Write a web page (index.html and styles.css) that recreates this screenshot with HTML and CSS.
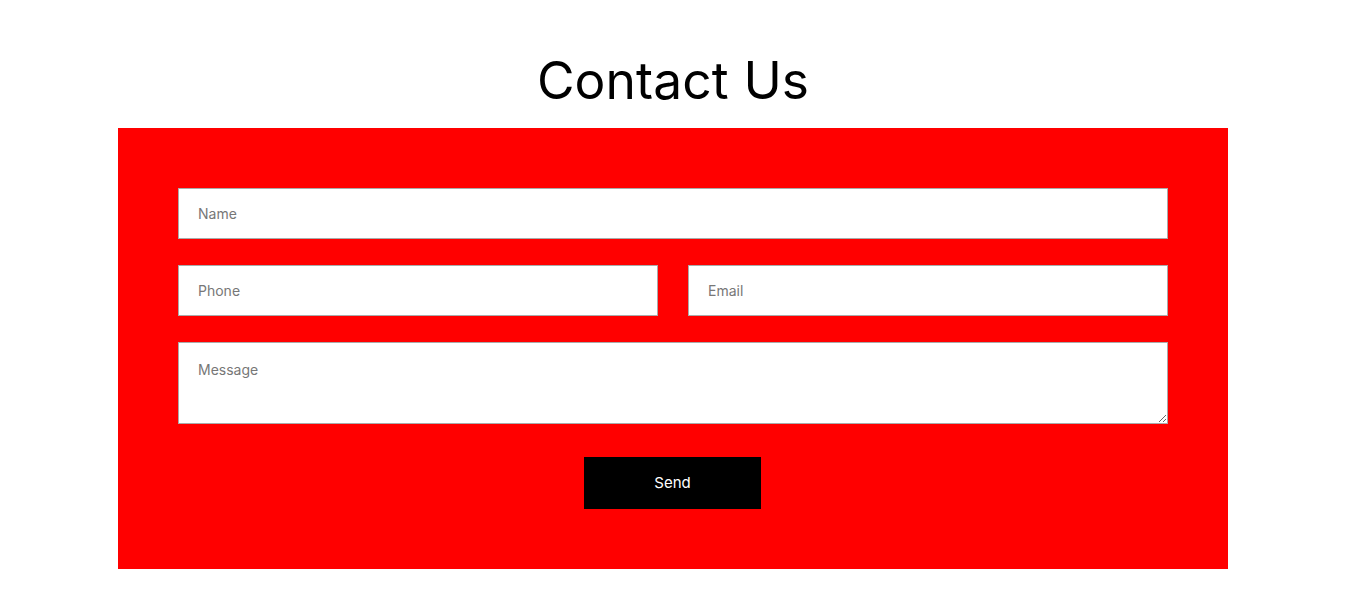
FILE: index.html
```html
<!DOCTYPE html>
<html>
<head>
<meta charset="utf-8">
<link rel="stylesheet" href="styles.css">
</head>
<body>
<section class="contact">
  <h2 class="title">Contact Us</h2>
  <form class="panel">
    <input class="field" type="text" placeholder="Name">
    <div class="row">
      <input class="field" type="text" placeholder="Phone">
      <input class="field" type="email" placeholder="Email">
    </div>
    <textarea class="field area" placeholder="Message"></textarea>
    <div class="actions">
      <button class="send" type="button">Send</button>
    </div>
  </form>
</section>
</body>
</html>
```
FILE: styles.css
```css
html, body {
  margin: 0;
  padding: 0;
  background: #fff;
}
body {
  font-family: "Inter", "Lato", "Open Sans", sans-serif;
}
.contact {
  display: flex;
  flex-direction: column;
  align-items: center;
  padding-top: 50px;
  padding-right: 1px;
}
.title {
  margin: 0 0 18px;
  font-size: 51.5px;
  line-height: 60px;
  font-weight: 400;
  color: #000;
  letter-spacing: 0.1px;
}
.panel {
  width: 990px;
  background: #ff0000;
  padding: 60px;
  display: flex;
  flex-direction: column;
  gap: 26px;
}
.row {
  display: flex;
  gap: 30px;
}
.field {
  box-sizing: border-box;
  display: block;
  width: 100%;
  height: 51px;
  margin: 0;
  padding: 0 19px;
  border: 1px solid #aaa;
  border-radius: 0;
  background: #fff;
  font-family: inherit;
  font-size: 14px;
  color: #333;
  outline: none;
}
.row .field {
  flex: 1;
  min-width: 0;
}
.field::placeholder {
  color: #777;
}
.area {
  height: 82px;
  padding-top: 18px;
  resize: vertical;
}
.actions {
  display: flex;
  justify-content: center;
  padding-top: 7px;
  padding-right: 1px;
}
.send {
  width: 177px;
  height: 52px;
  padding: 0 0 2px;
  background: #000;
  color: #fff;
  border: none;
  border-radius: 0;
  font-family: inherit;
  font-size: 15px;
  cursor: pointer;
}
```
